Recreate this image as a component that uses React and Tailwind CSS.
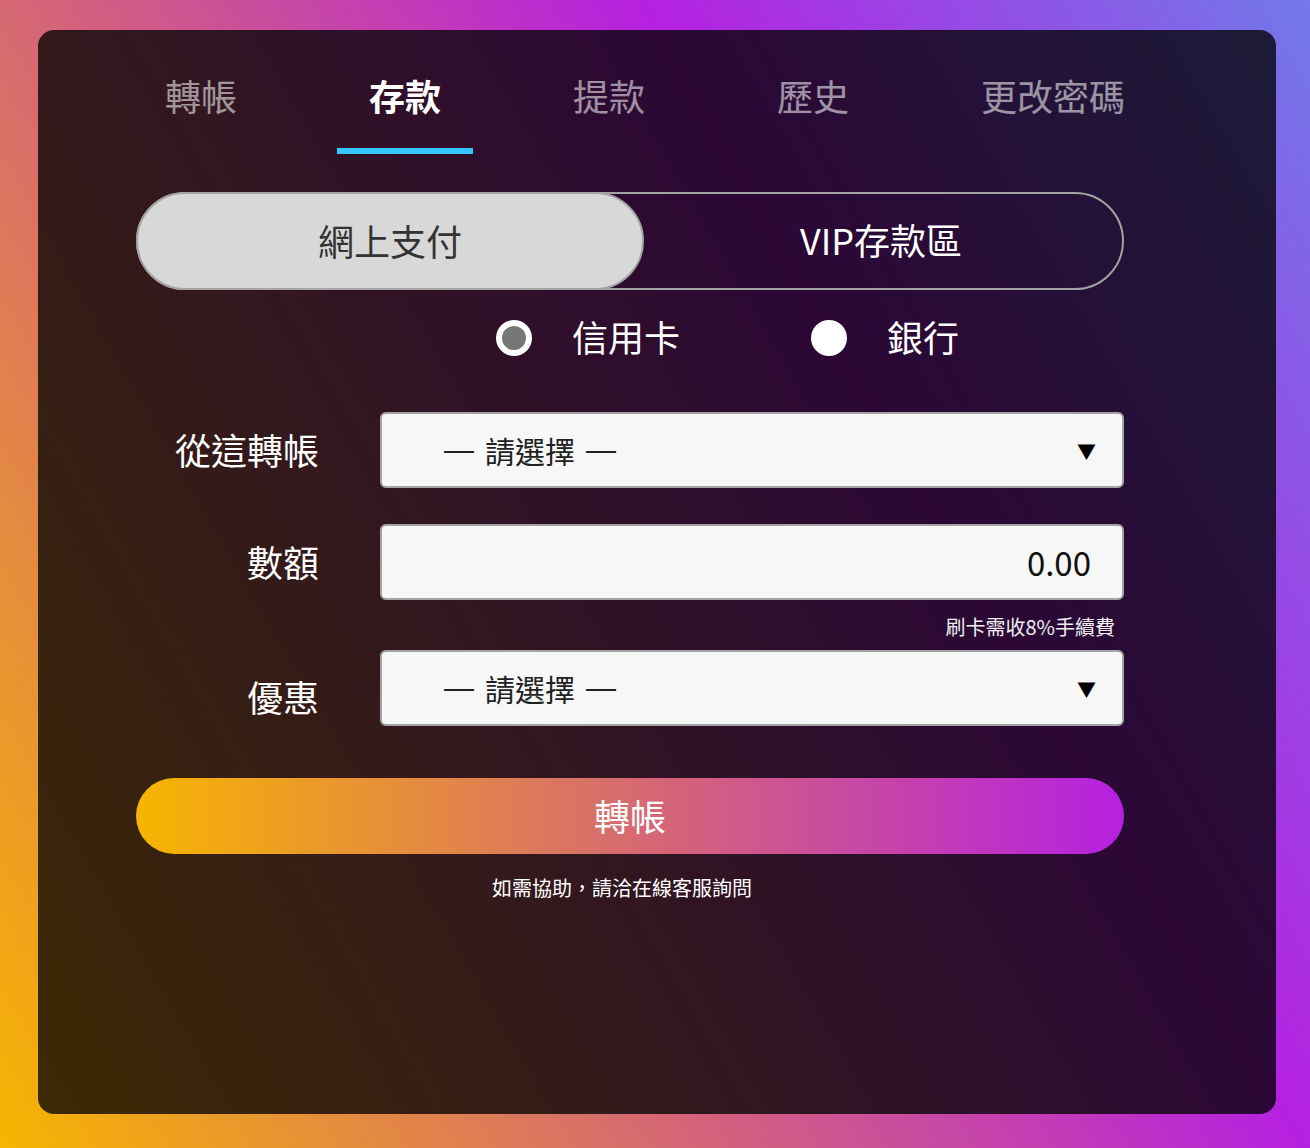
import React, { useState } from 'react';

const tabs = ['轉帳', '存款', '提款', '歷史', '更改密碼'];

const font = { fontFamily: '"Noto Sans CJK TC", "Noto Sans", sans-serif' };

const Dash = () => <span className="font-['Liberation_Sans'] text-[30px]">—</span>;

const SelectBox = ({ label, labelClass = '' }) => (
  <div className="flex items-start">
    <div className={`w-[183px] text-right text-[36px] leading-[44px] text-white ${labelClass}`}>{label}</div>
    <div className="ml-[61px] flex h-[76px] flex-1 items-center justify-between rounded-[6px] border-2 border-[#a3a3a3] bg-[#f7f7f7] pl-[62px] pr-[26px]">
      <span className="flex items-center text-[30px] leading-none text-[#222]">
        <Dash />
        <span className="mx-[11px]">請選擇</span>
        <Dash />
      </span>
      <span className="text-[19px] leading-none text-black">▼</span>
    </div>
  </div>
);

const App = () => {
  const [tab, setTab] = useState(1);
  const [mode, setMode] = useState(0);
  const [method, setMethod] = useState(0);

  return (
    <div
      style={font}
      className="h-[1148px] w-full bg-[linear-gradient(60deg,#f7b500_0%,#b620e0_66%,#7279ea_100%)] pt-[30px] pr-[34px] pl-[38px]"
    >
      <div className="h-[1084px] rounded-[16px] bg-black/[0.76] pt-[43px]">
        {/* tabs */}
        <div className="flex gap-[68px] pl-[95px]">
          {tabs.map((t, i) => (
            <button key={t} onClick={() => setTab(i)} className="flex flex-col items-center">
              <span
                className={`px-8 text-[36px] leading-[44px] ${
                  i === tab ? 'font-bold text-white' : 'text-white/55'
                }`}
              >
                {t}
              </span>
              <span className={`mt-[31px] h-[6px] w-full ${i === tab ? 'bg-[#33c6ff]' : 'bg-transparent'}`} />
            </button>
          ))}
        </div>

        <div className="ml-[98px] mr-[152px] mt-[38px]">
          {/* payment type toggle */}
          <div className="flex h-[98px] rounded-full border-2 border-[#a3a3a3]">
            <button
              onClick={() => setMode(0)}
              className={`-my-[2px] -ml-[2px] flex h-[98px] w-[508px] items-center justify-center rounded-full pb-[2px] text-[36px] ${
                mode === 0 ? 'border-2 border-[#a3a3a3] bg-[#d8d8d8] text-[#333]' : 'text-white'
              }`}
            >
              網上支付
            </button>
            <button
              onClick={() => setMode(1)}
              className="flex flex-1 items-center justify-center pr-[4px] pb-[4px] text-[36px] text-white"
            >
              VIP存款區
            </button>
          </div>

          {/* radios */}
          <div className="mt-[26px] flex h-[44px] items-center pl-[360px]">
            <button onClick={() => setMethod(0)} className="flex items-center">
              <span className="flex h-9 w-9 items-center justify-center rounded-full bg-white">
                {method === 0 && <span className="h-6 w-6 rounded-full bg-[#777]" />}
              </span>
              <span className="ml-[40px] -mt-[4px] text-[36px] leading-[44px] text-white">信用卡</span>
            </button>
            <button onClick={() => setMethod(1)} className="ml-[131px] flex items-center">
              <span className="flex h-9 w-9 items-center justify-center rounded-full bg-white">
                {method === 1 && <span className="h-6 w-6 rounded-full bg-[#777]" />}
              </span>
              <span className="ml-[40px] -mt-[4px] text-[36px] leading-[44px] text-white">銀行</span>
            </button>
          </div>

          {/* form */}
          <div className="mt-[52px]">
            <SelectBox label="從這轉帳" labelClass="mt-[15px]" />

            <div className="mt-[36px] flex items-start">
              <div className="mt-[15px] w-[183px] text-right text-[36px] leading-[44px] text-white">數額</div>
              <div className="ml-[61px] flex h-[76px] flex-1 items-center justify-end rounded-[6px] border-2 border-[#a3a3a3] bg-[#f7f7f7] pr-[31px]">
                <span className="text-[33px] leading-none text-[#111]">0.00</span>
              </div>
            </div>

            <div className="mt-[13px] pr-[9px] text-right text-[20px] leading-[28px] text-[#eee]">刷卡需收8%手續費</div>

            <div className="mt-[9px]">
              <SelectBox label="優惠" labelClass="mt-[24px]" />
            </div>
          </div>

          {/* submit */}
          <button className="mt-[52px] flex h-[76px] w-full items-center justify-center rounded-full bg-[linear-gradient(90deg,#f7b500,#b620e0)] pb-[2px] text-[36px] text-white">
            轉帳
          </button>

          <p className="mt-[20px] pr-[16px] text-center text-[20px] leading-[28px] text-white">如需協助，請洽在線客服詢問</p>
        </div>
      </div>
    </div>
  );
};

export default App;
